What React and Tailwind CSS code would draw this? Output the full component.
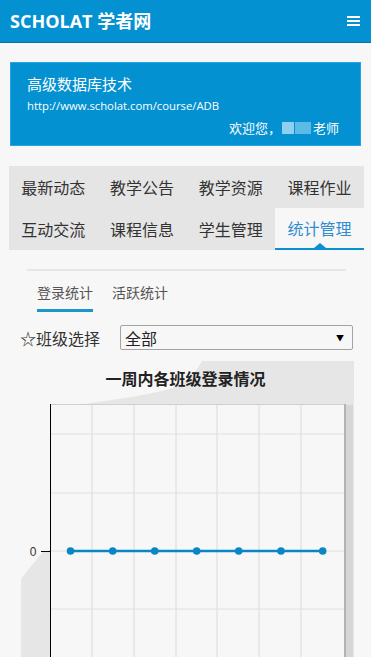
import React from "react";

const tabs = [
  ["最新动态", "教学公告", "教学资源", "课程作业"],
  ["互动交流", "课程信息", "学生管理", "统计管理"],
];

const cjk = { fontFamily: '"Noto Sans CJK SC", "Noto Sans", sans-serif' };

function Chart() {
  const xs = [92, 134, 176, 217, 259, 301];
  const ys = [433, 492, 550, 608];
  const dots = [70.5, 112.7, 154.7, 196.7, 238.7, 281, 322.7];
  const o = 355;
  return (
    <div className="relative h-[302px] w-full">
      <svg width="371" height="302" viewBox={`0 ${o} 371 302`} className="block">
        {/* shadow shapes */}
        <path d="M202 360 L354 360 L354 657 L346 657 L346 403 L85 403 C120 398 160 392 175 386 C190 378 198 368 202 360 Z" fill="#e6e6e6" />
        <path d="M50 549 L43 551 C35 560 27 570 21 578 L21 657 L50 657 Z" fill="#e6e6e6" />
        {/* plot */}
        <rect x="50" y="403" width="295" height="260" fill="#f7f7f7" />
        {xs.map((x) => (
          <line key={x} x1={x} y1="403" x2={x} y2="657" stroke="#dadada" strokeWidth="1" />
        ))}
        {ys.map((y) => (
          <line key={y} x1="50" y1={y} x2="344" y2={y} stroke="#e0e0e0" strokeWidth="1" />
        ))}
        <line x1="50" y1="403.5" x2="345" y2="403.5" stroke="#cfcfcf" strokeWidth="1" />
        <line x1="345" y1="403" x2="345" y2="657" stroke="#b3b3b3" strokeWidth="2" />
        <rect x="346" y="404" width="7" height="253" fill="#d6d6d6" />
        <line x1="50.5" y1="403" x2="50.5" y2="657" stroke="#000" strokeWidth="1" />
        <line x1="41" y1="550.5" x2="50" y2="550.5" stroke="#000" strokeWidth="1" />
        <text x="33" y="555" fontSize="12" fill="#333" textAnchor="middle" fontFamily="Liberation Sans, sans-serif">0</text>
        <line x1={dots[0]} y1="550" x2={dots[6]} y2="550" stroke="#0a86c4" strokeWidth="2.5" />
        {dots.map((x) => (
          <circle key={x} cx={x} cy="550" r="3.8" fill="#0a86c4" />
        ))}
      </svg>
      <div
        className="absolute left-0 right-0 top-[12px] text-center text-[16px] font-bold leading-[20px] text-[#222]"
        style={cjk}
      >
        一周内各班级登录情况
      </div>
    </div>
  );
}

export default function App() {
  return (
    <div className="min-h-screen w-full overflow-hidden bg-[#f7f7f7]" style={cjk}>
      <header className="flex h-[43px] items-center justify-between border-b border-[#0b6d9e] bg-[#0391d1] pl-[10px] pr-[11px]">
        <div className="text-[18px] font-bold text-white" style={{ fontFamily: '"Open Sans", "Noto Sans CJK SC", sans-serif' }}>
          SCHOLAT 学者网
        </div>
        <div className="flex w-[13px] flex-col gap-[2px]">
          <span className="h-[2px] bg-white" />
          <span className="h-[2px] bg-white" />
          <span className="h-[2px] bg-white" />
        </div>
      </header>

      <div className="mx-[10px] mt-[19px] h-[84px] border border-[#22a4e4] bg-[#0391d1] pl-[16px] pr-[21px] pt-[10px] text-white">
        <div className="text-[15px] leading-[22px]">高级数据库技术</div>
        <div className="mt-[4px] text-[11.3px] leading-[14px]" style={{ fontFamily: '"Open Sans", sans-serif' }}>
          http://www.scholat.com/course/ADB
        </div>
        <div className="mt-[6px] flex items-center justify-end text-[13px] leading-[18px]">
          欢迎您，
          <span className="mx-[1px] inline-block h-[12px] w-[12px] bg-[#8fd0f0]" />
          <span className="mr-[2px] inline-block h-[12px] w-[16px] bg-[#5db9e6]" />
          老师
        </div>
      </div>

      <div className="ml-[9px] mr-[7px] mt-[20px] bg-[#e5e5e5]">
        {tabs.map((row, i) => (
          <div key={i} className="grid grid-cols-4">
            {row.map((t) => {
              const active = t === "统计管理";
              return (
                <div
                  key={t}
                  className={
                    active
                      ? "relative flex h-[42px] items-center justify-center border-b-2 border-[#0a8fd0] bg-[#f7f7f7] text-[16px] text-[#2f8dd0]"
                      : "flex h-[42px] items-center justify-center text-[16px] text-[#333]"
                  }
                >
                  {t}
                  {active && (
                    <span className="absolute bottom-0 left-1/2 h-0 w-0 -translate-x-1/2 border-x-[6px] border-b-[5px] border-x-transparent border-b-[#0a8fd0]" />
                  )}
                </div>
              );
            })}
          </div>
        ))}
      </div>

      <div className="mx-[27px] mt-[19px] h-[2px] w-[319px] bg-[#e6e6e6]" />

      <div className="ml-[37px] mt-[12px] flex gap-[19px] text-[14px] text-[#555]">
        <div className="border-b-[3px] border-[#1a96cc] pb-[8px] leading-[18px]">登录统计</div>
        <div className="leading-[18px]">活跃统计</div>
      </div>

      <div className="mt-[13px] flex items-center pl-[20px]">
        <div className="w-[100px] text-[16px] text-[#333]">☆班级选择</div>
        <div className="flex h-[25px] w-[233px] items-center justify-between rounded-[2px] border border-[#a3a3a3] bg-[#f7f7f7] pl-[4px] pr-[8px] text-[16px] text-[#222]">
          <span>全部</span>
          <span className="text-[8px] text-black">▼</span>
        </div>
      </div>

      <div className="mt-[6px]">
        <Chart />
      </div>
    </div>
  );
}
